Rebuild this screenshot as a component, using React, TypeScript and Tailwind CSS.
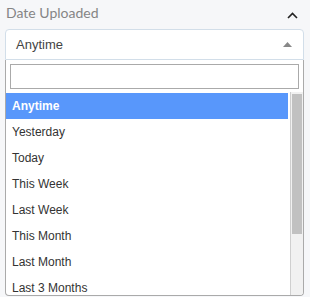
import React from 'react';

const options = [
  'Anytime',
  'Yesterday',
  'Today',
  'This Week',
  'Last Week',
  'This Month',
  'Last Month',
  'Last 3 Months',
];

const App: React.FC = () => {
  const selected = 'Anytime';

  return (
    <div className="w-[310px] h-[297px] bg-[#f6f7f9] overflow-hidden font-['Liberation_Sans',Arial,sans-serif]">
      {/* header */}
      <div className="h-[29px] flex items-start justify-between pl-[6px] pr-[12px] pt-[4px]">
        <span className="text-[14px] leading-[18px] text-[#858585] font-['Lato',sans-serif]">Date Uploaded</span>
        <svg width="11" height="7" viewBox="0 0 11 7" className="mt-[8px]">
          <polyline points="1,6 5.5,1.5 10,6" fill="none" stroke="#222" strokeWidth="1.6" />
        </svg>
      </div>

      <div className="ml-[5px] w-[299px]">
        {/* select box */}
        <div className="h-[31px] bg-white border border-[#d2dee9] rounded-t-[4px] flex items-center justify-between pl-[10px] pr-[11px]">
          <span className="text-[13px] text-[#444]">{selected}</span>
          <svg width="9" height="5" viewBox="0 0 9 5">
            <polygon points="0,5 4.5,0 9,5" fill="#888" />
          </svg>
        </div>

        {/* dropdown */}
        <div className="h-[236px] bg-white border-x border-b border-[#aaa] rounded-b-[4px] overflow-hidden flex flex-col">
          <div className="px-[4px] pt-[4px] pb-[4px]">
            <input
              type="text"
              className="block w-full h-[25px] border border-[#aaa] bg-white outline-none px-[4px] text-[12px]"
            />
          </div>
          <div className="flex flex-1 min-h-0">
            <ul className="w-[282px] overflow-hidden">
              {options.map((o) => (
                <li
                  key={o}
                  className={
                    o === selected
                      ? 'h-[26px] flex items-center pl-[6px] text-[12px] bg-[#5897fb] text-white font-bold'
                      : 'h-[26px] flex items-center pl-[6px] text-[12px] text-[#333]'
                  }
                >
                  {o}
                </li>
              ))}
            </ul>
            <div className="ml-auto w-[13px] -mt-[1px] bg-[#f1f1f1] border-l border-[#cfcfcf] flex flex-col">
              <div className="h-[140px] mt-[2px] ml-[1px] w-[10px] bg-[#c1c1c1]" />
            </div>
          </div>
        </div>
      </div>
    </div>
  );
};

export default App;
